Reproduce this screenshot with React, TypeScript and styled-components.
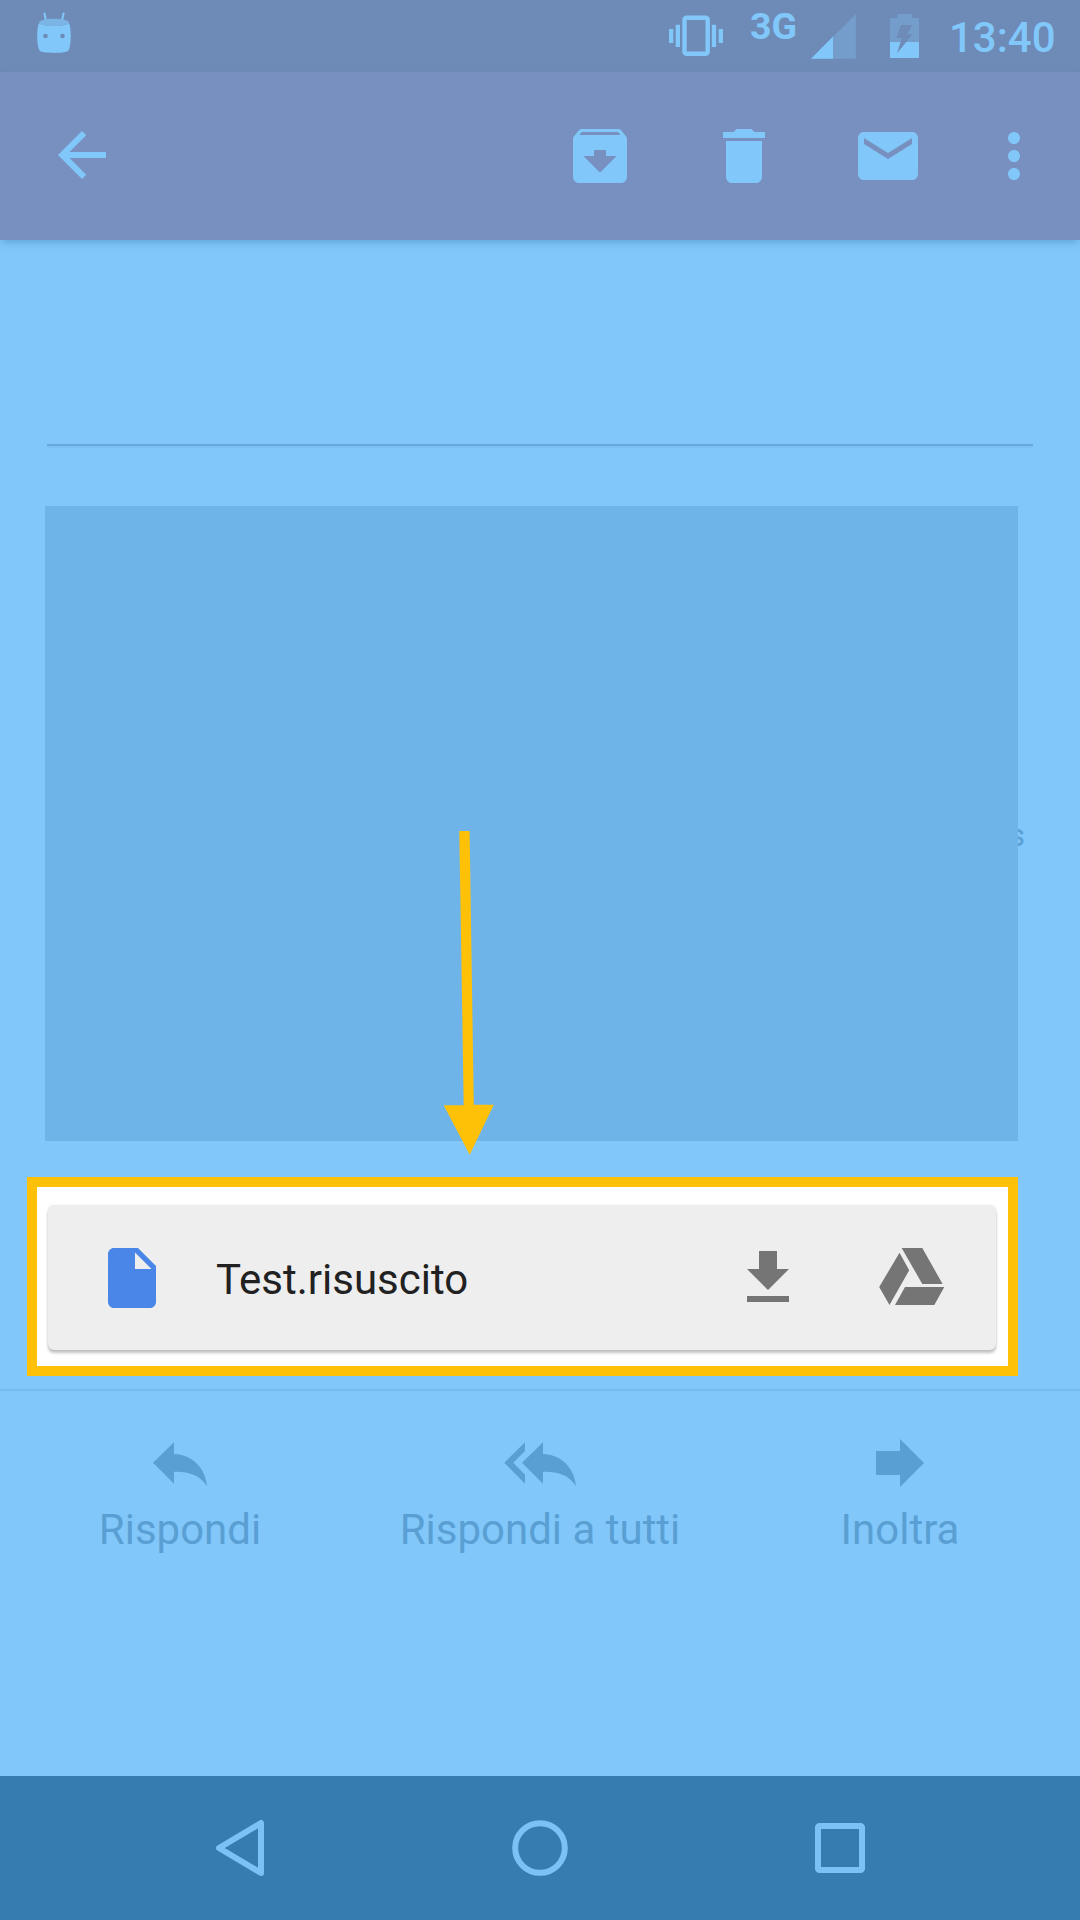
import React from "react";
import styled, { createGlobalStyle } from "styled-components";

const sky = "#81c7fa";
const muted = "#5a9fd3";
const amber = "#ffc107";

const GlobalStyle = createGlobalStyle`
  *, *::before, *::after { box-sizing: border-box; }
  body { margin: 0; background: ${sky}; }
  svg { display: block; flex: none; }
`;

const Screen = styled.div`
  position: relative;
  display: flex;
  flex-direction: column;
  width: 1080px;
  height: 1920px;
  overflow: hidden;
  background: ${sky};
  font-family: Roboto, "Noto Sans", sans-serif;
  font-size: 42px;
`;

const StatusBar = styled.header`
  display: flex;
  justify-content: space-between;
  flex: none;
  height: 72px;
  padding: 0 24px 0 36px;
  background: #6e8bb7;
  color: ${sky};
`;

const StatusGroup = styled.div`
  display: flex;
  height: 72px;
`;

const NetworkType = styled.span`
  width: 59px;
  margin-left: 27px;
  font-size: 37.5px;
  font-weight: 700;
  line-height: 42px;
  padding-top: 5px;
`;

const Clock = styled.time`
  width: 107px;
  margin-left: 30px;
  font-weight: 500;
  line-height: 50px;
  padding-top: 13px;
  white-space: nowrap;
`;

const Toolbar = styled.nav`
  display: flex;
  align-items: center;
  justify-content: space-between;
  flex: none;
  height: 168px;
  padding: 0 30px 0 46px;
  background: #7890c0;
  color: ${sky};
  box-shadow: 0 4px 8px -2px rgba(60, 125, 180, 0.5);
`;

const ToolbarActions = styled.div`
  display: flex;
  gap: 72px;
`;

const IconButton = styled.button<{ $pull?: number; $lift?: number }>`
  display: block;
  width: 72px;
  height: 72px;
  margin: 0 0 ${(p) => p.$lift ?? 0}px ${(p) => -(p.$pull ?? 0)}px;
  padding: 0;
  border: 0;
  background: none;
  color: inherit;
`;

const Content = styled.main`
  display: flex;
  flex-direction: column;
  flex: 1;
`;

const Subject = styled.section`
  height: 208px;
  margin: -2px 47px 0;
  border-bottom: 2px solid #66a9df;
  box-shadow: 0 2px 0 #7bc0f4;
  clip-path: inset(0 0 -3px 0);
`;

const Message = styled.section`
  position: relative;
  width: 980px;
  height: 635px;
  margin: 60px 0 0 45px;
  padding-top: 310px;
  color: ${muted};
  font-size: 32px;
  line-height: 38px;
  text-align: right;
`;

const Redaction = styled.div`
  position: absolute;
  inset: 0 7px 0 0;
  background: #6fb4e8;
`;

const Pointer = styled.svg`
  position: absolute;
  left: 440px;
  top: 828px;
`;

const Highlight = styled.section`
  width: 991px;
  height: 199px;
  margin: 36px 0 0 27px;
  padding: 18px 12px 16px 10.5px;
  border: 10px solid ${amber};
  background: #fff;
`;

const Attachment = styled.div`
  display: flex;
  align-items: center;
  height: 145px;
  padding: 0 48px 0 48.5px;
  border-radius: 6px;
  background: #eee;
  color: #757575;
  box-shadow: 0 3px 3px rgba(0, 0, 0, 0.24), 0 0 2px rgba(0, 0, 0, 0.1);
`;

const FileName = styled.span`
  flex: 1;
  padding: 4px 0 0 48px;
  color: #212121;
  line-height: 50px;
`;

const AttachmentActions = styled.div`
  display: flex;
  gap: 72px;
`;

const Replies = styled.section`
  display: grid;
  grid-template-columns: repeat(3, 1fr);
  margin-top: 13px;
  padding-top: 36px;
  border-top: 2px solid #77bcf0;
`;

const ReplyAction = styled.button`
  display: flex;
  flex-direction: column;
  align-items: center;
  padding: 0;
  border: 0;
  background: none;
  color: ${muted};
  font: inherit;
  line-height: 50px;
  gap: 6px;
`;

const NavigationBar = styled.footer`
  display: flex;
  align-items: center;
  justify-content: space-around;
  flex: none;
  height: 144px;
  padding: 0 90px;
  background: #367cb0;
  color: #7cc1f5;
`;

const BatterySvg = styled.svg`
  margin-left: 34px;
`;

const Glyph = ({ d }: { d: string }) => (
  <svg width="72" height="72" viewBox="0 0 24 24" fill="currentColor">
    <path d={d} />
  </svg>
);

const NavGlyph = ({ children }: { children: React.ReactNode }) => (
  <svg width="72" height="72" fill="none" stroke="currentColor" strokeWidth="6" strokeLinejoin="round">
    {children}
  </svg>
);

const AndroidIcon = () => (
  <svg width="36" height="72" viewBox="36 0 36 72">
    <path d="M44.3 12.8l1.8 8.7M63.7 12.8l-1.8 8.7" stroke={sky} strokeWidth="2" />
    <path
      d="M39 23C42 27 66 27 69 23C71.400 29 71.400 43 69 49.500C68.500 51 67 51.700 65 52C59 53.200 49 53.200 43 52C41 51.700 39.500 51 39 49.500C36.600 43 36.600 29 39 23Z"
      fill={sky}
    />
    <ellipse cx="54" cy="22.500" rx="15" ry="3.700" fill="#7ab5e6" />
    <circle cx="45.500" cy="36" r="2.300" fill="#6e8bb7" />
    <circle cx="62.500" cy="36" r="2.300" fill="#6e8bb7" />
  </svg>
);

const VibrateIcon = () => (
  <svg width="54" height="72" viewBox="669 0 54 72" fill="currentColor">
    <rect x="684.500" y="17.800" width="23.200" height="36" rx="2" fill="none" stroke="currentColor" strokeWidth="4.400" />
    <path d="M669 29h4.300v14H669zM675.700 24.700h4.300V47h-4.300zM711.800 24.700h4.300V47h-4.300zM718.700 29h4.300v14h-4.300z" />
  </svg>
);

const SignalIcon = () => (
  <svg width="47" height="72" viewBox="809 0 47 72">
    <path d="M811 58.800L855.800 14v44.800z" fill="#759dcb" />
    <path d="M811 58.800L833 36.500v22.300z" fill={sky} />
  </svg>
);

const BatteryIcon = () => (
  <BatterySvg width="29" height="72" viewBox="0 0 29 72">
    <path d="M7.500 14h14.500v4H29v24H0V18h7.500z" fill="#759dcb" />
    <path d="M0 42h29v16H0z" fill={sky} />
    <path d="M11 25h11l-4.500 9.300h5L7 53.300 11.800 38H6.300z" fill="#6e8bb7" />
  </BatterySvg>
);

const DriveIcon = () => (
  <svg width="72" height="72" fill="currentColor">
    <path d="M25.700 6h20.600l20.300 36H46.300zM23.500 10.700l9.700 17.500L13.500 63 3.200 45zM29 45h39.300l-10 18H19z" />
  </svg>
);

const replyArrow = "M9 35.700L30 15.300V27C47 27.500 61.500 40 63 59.300C56 47.500 44 44.300 30 44.700V56.700Z";

const replies = [
  {
    label: "Rispondi",
    icon: (
      <svg width="72" height="72" fill="currentColor">
        <path d={replyArrow} />
      </svg>
    ),
  },
  {
    label: "Rispondi a tutti",
    icon: (
      <svg width="72" height="72" fill="currentColor">
        <path d={replyArrow} transform="translate(9 0)" />
        <path d="M.3 35.700L21 15.300V24L9.300 35.700 21 47.700v9z" />
      </svg>
    ),
  },
  {
    label: "Inoltra",
    icon: (
      <svg width="72" height="72" fill="currentColor">
        <path d="M12 24h24V12l24 24-24 24V48H12z" />
      </svg>
    ),
  },
];

const toolbarActions = [
  {
    name: "Archivia",
    pull: 0,
    d: "M20.54 5.230l-1.390-1.680C18.880 3.210 18.470 3 18 3H6c-.47 0-.88.21-1.160.55L3.460 5.230C3.170 5.570 3 6.020 3 6.500V19c0 1.100.9 2 2 2h14c1.100 0 2-.9 2-2V6.500c0-.48-.17-.93-.46-1.270zM12 17.500L6.500 12H10v-2h4v2h3.500L12 17.500zM5.120 5l.81-1h12l.94 1H5.120z",
  },
  { name: "Elimina", pull: 0, d: "M6 19c0 1.100.9 2 2 2h8c1.100 0 2-.9 2-2V7H6v12zM19 4h-3.500l-1-1h-5l-1 1H5v2h14V4z" },
  {
    name: "Segna come da leggere",
    pull: 0,
    d: "M20 4H4c-1.100 0-1.990.9-1.990 2L2 18c0 1.100.9 2 2 2h16c1.100 0 2-.9 2-2V6c0-1.100-.9-2-2-2zm0 4l-8 5-8-5V6l8 5 8-5v2z",
  },
  {
    name: "Altro",
    pull: 18,
    d: "M12 8c1.100 0 2-.9 2-2s-.9-2-2-2-2 .9-2 2 .9 2 2 2zm0 2c-1.100 0-2 .9-2 2s.9 2 2 2 2-.9 2-2-.9-2-2-2zm0 6c-1.100 0-2 .9-2 2s.9 2 2 2 2-.9 2-2-.9-2-2-2z",
  },
];

export default function App() {
  return (
    <>
      <GlobalStyle />
      <Screen>
        <StatusBar>
          <AndroidIcon />
          <StatusGroup>
            <VibrateIcon />
            <NetworkType>3G</NetworkType>
            <SignalIcon />
            <BatteryIcon />
            <Clock>13:40</Clock>
          </StatusGroup>
        </StatusBar>
        <Toolbar>
          <IconButton aria-label="Indietro" $lift={2}>
            <Glyph d="M20 11H7.830l5.590-5.590L12 4l-8 8 8 8 1.410-1.410L7.830 13H20v-2z" />
          </IconButton>
          <ToolbarActions>
            {toolbarActions.map((a) => (
              <IconButton key={a.name} aria-label={a.name} $pull={a.pull}>
                <Glyph d={a.d} />
              </IconButton>
            ))}
          </ToolbarActions>
        </Toolbar>
        <Content>
          <Subject />
          <Message>
            s
            <Redaction />
          </Message>
          <Highlight>
            <Attachment>
              <svg width="72" height="72" viewBox="0 0 24 24" fill="#4a86e8">
                <path d="M6 2c-1.100 0-1.990.9-1.990 2L4 20c0 1.100.89 2 1.990 2H18c1.100 0 2-.9 2-2V8l-6-6H6zm7 7V3.500L18.500 9H13z" />
              </svg>
              <FileName>Test.risuscito</FileName>
              <AttachmentActions>
                <IconButton aria-label="Scarica">
                  <Glyph d="M19 9h-4V3H9v6H5l7 7 7-7zM5 18v2h14v-2H5z" />
                </IconButton>
                <IconButton aria-label="Salva su Drive">
                  <DriveIcon />
                </IconButton>
              </AttachmentActions>
            </Attachment>
          </Highlight>
          <Replies>
            {replies.map((r) => (
              <ReplyAction key={r.label}>
                {r.icon}
                {r.label}
              </ReplyAction>
            ))}
          </Replies>
        </Content>
        <NavigationBar>
          <NavGlyph>
            <path d="M57 11v50L15 36z" />
          </NavGlyph>
          <NavGlyph>
            <circle cx="36" cy="36" r="24.800" />
          </NavGlyph>
          <NavGlyph>
            <rect x="14" y="14" width="44" height="44" rx="1.500" />
          </NavGlyph>
        </NavigationBar>
        <Pointer width="60" height="330" fill={amber}>
          <path d="M19.300 3h10.300l4.200 273.800h20L29.700 326.800 3.700 277.300h20z" />
        </Pointer>
      </Screen>
    </>
  );
}
